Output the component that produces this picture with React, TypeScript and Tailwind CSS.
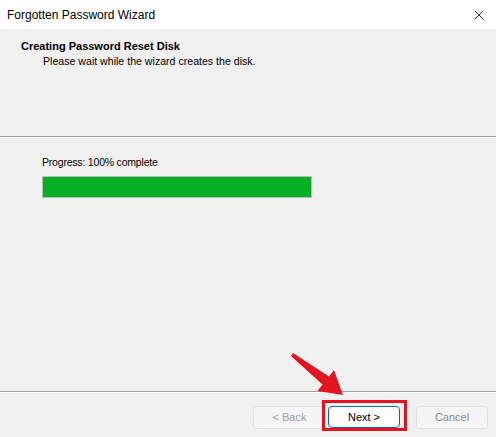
import { X } from "lucide-react";

export default function App() {
  return (
    <div className="relative w-[496px] h-[437px] bg-[#f0f0f0] flex flex-col overflow-hidden font-['Liberation_Sans',Arial,sans-serif]">
      {/* title bar */}
      <div className="h-[29px] bg-white flex items-center justify-between pl-[7px] pr-[9px] shrink-0">
        <span className="text-[12px] text-black">Forgotten Password Wizard</span>
        <X size={16} strokeWidth={1.2} className="text-black" />
      </div>

      {/* header */}
      <div className="h-[107px] shrink-0 pt-[11px] pl-[21px]">
        <h1 className="text-[11px] font-bold text-black leading-[13px]">Creating Password Reset Disk</h1>
        <p className="text-[10.6px] text-black leading-[13px] mt-[2px] pl-[22px]">Please wait while the wizard creates the disk.</p>
      </div>
      <div className="h-px bg-[#a0a0a0] shrink-0" />
      <div className="h-px bg-white shrink-0" />

      {/* content */}
      <div className="flex-1 pt-[18px] pl-[42px]">
        <p className="text-[10.5px] tracking-[-0.2px] text-black leading-[13px]">Progress: 100% complete</p>
        <div className="mt-[7px] w-[270px] h-[22px] border border-[#bcbcbc] bg-[#e6e6e6]">
          <div className="h-full w-full bg-[#06b025]" />
        </div>
      </div>

      <div className="h-px bg-[#a0a0a0] shrink-0" />
      <div className="h-px bg-white shrink-0" />

      {/* footer */}
      <div className="h-[44px] shrink-0 flex items-start pt-[13px] pl-[253px] gap-[2px]">
        <button className="w-[73px] h-[23px] rounded-[4px] border border-[#e0e0e0] bg-[#f5f5f5] text-[11px] text-[#9d9d9d]">&lt; Back</button>
        <button className="w-[72px] h-[22px] rounded-[4px] border-[1.5px] border-[#0067c0] bg-[#fdfdfd] text-[11px] text-black">Next &gt;</button>
        <button className="ml-[14px] w-[72px] h-[23px] rounded-[4px] border border-[#e0e0e0] bg-[#f5f5f5] text-[11px] text-[#8a8a8a]">Cancel</button>
      </div>

      {/* annotation: highlight box around Next */}
      <div className="absolute left-[322px] top-[400px] w-[85px] h-[31px] border-[3px] border-[#e3131f]" />
      {/* annotation: arrow */}
      <svg className="absolute left-0 top-0" width="496" height="437" viewBox="0 0 496 437">
        <polygon
          points="291,356 293,353 329,376.5 334,370 343,395 317.5,391 322.5,384.5"
          fill="#e3131f"
        />
      </svg>
    </div>
  );
}
